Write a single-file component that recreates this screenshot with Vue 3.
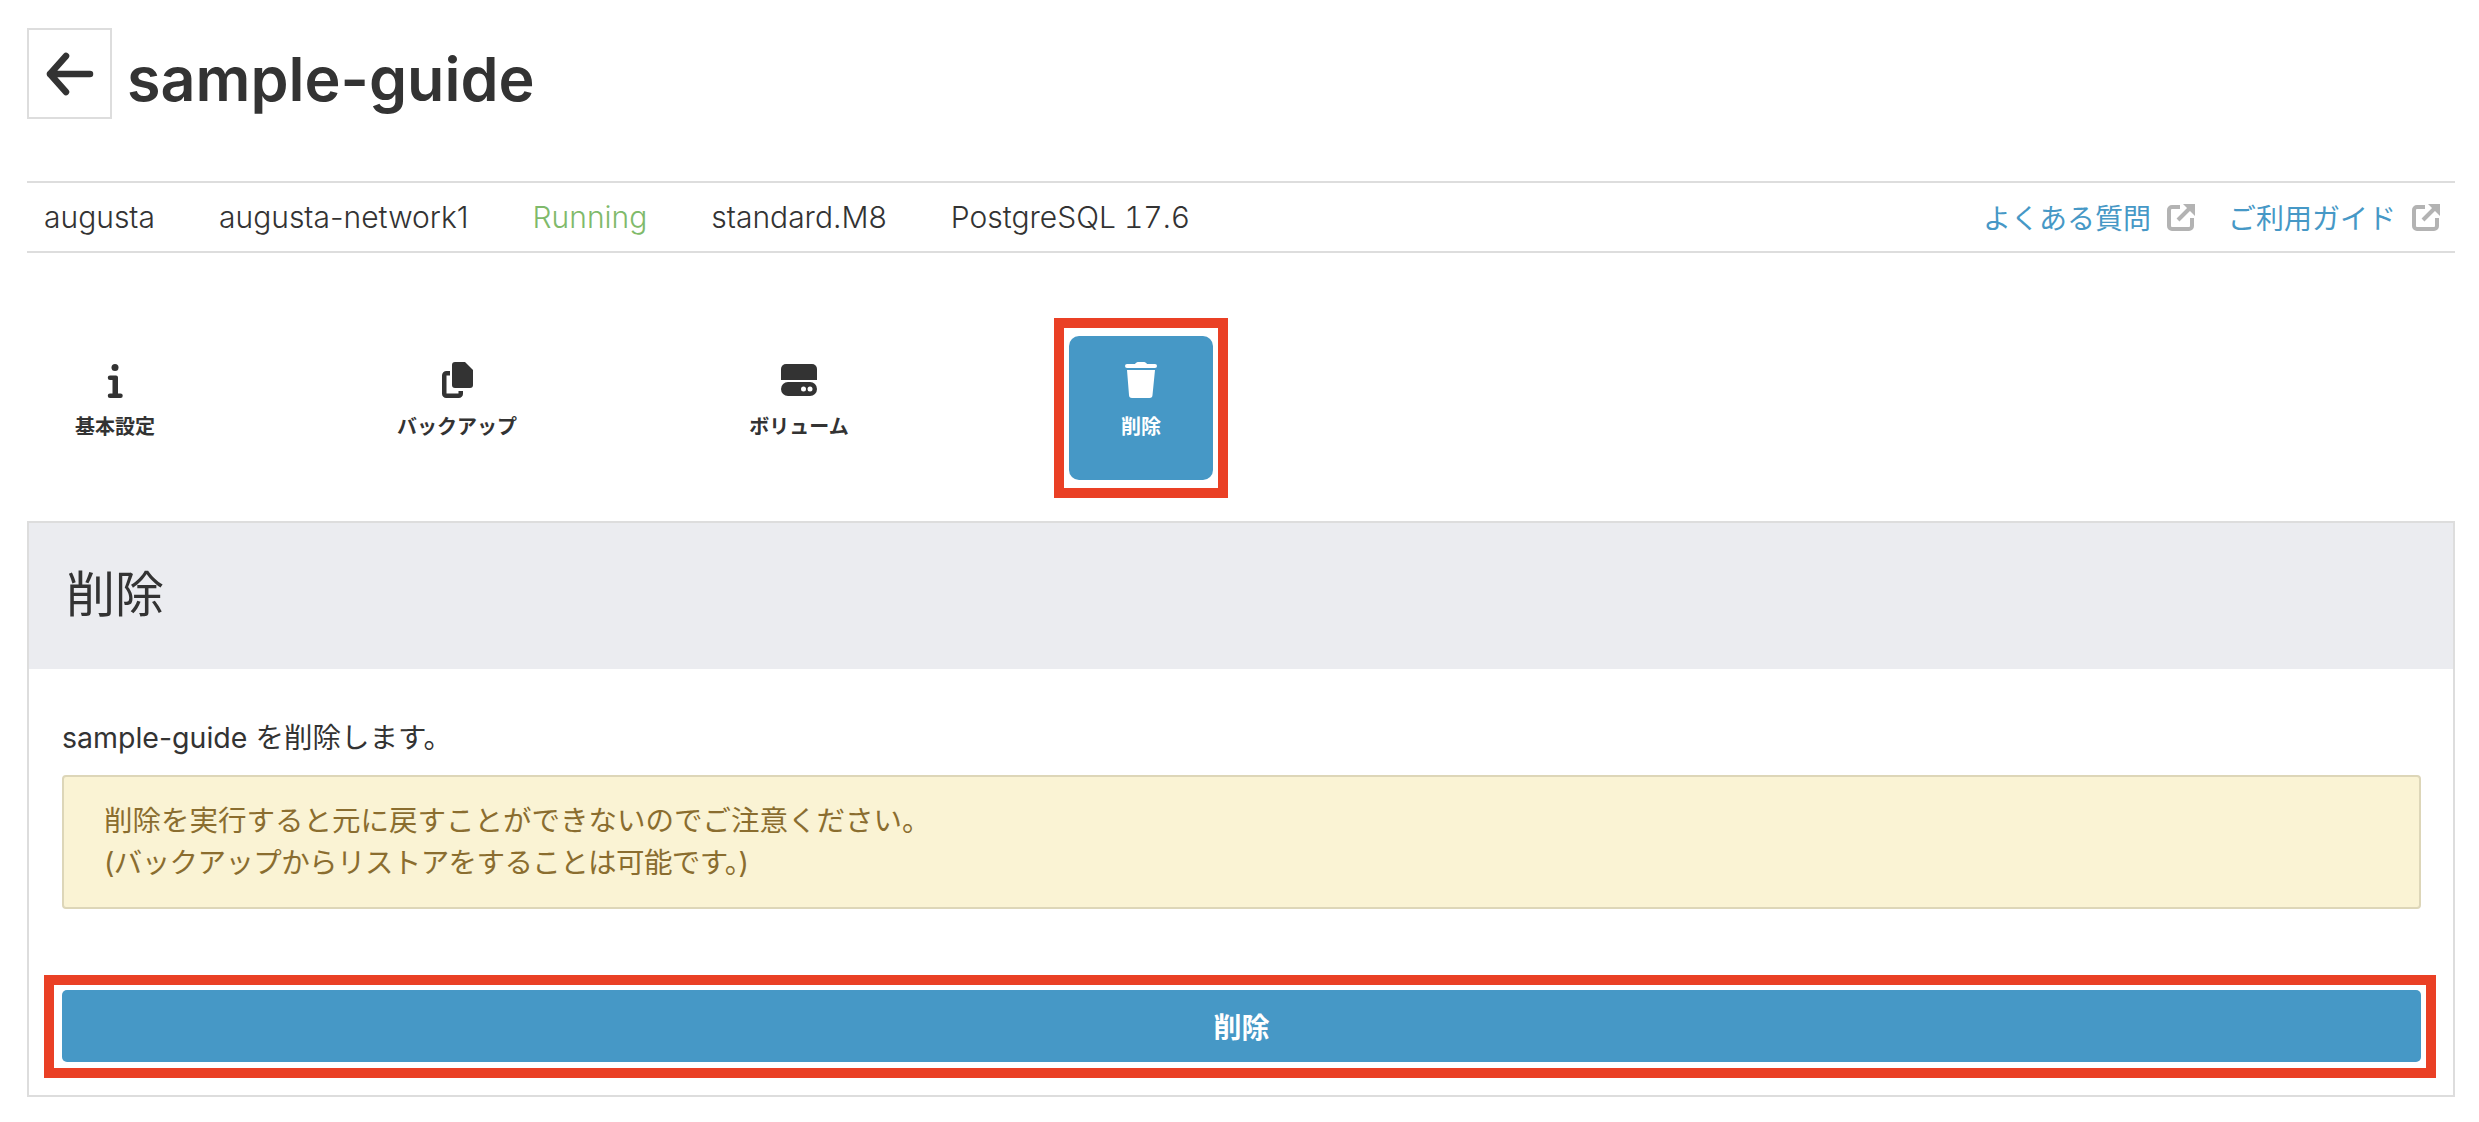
<template>
  <div class="page">
    <div class="title-row">
      <button class="back">
        <svg width="50" height="50" viewBox="0 0 50 50" fill="none" stroke="#333" stroke-width="6.500" stroke-linecap="round" stroke-linejoin="round">
          <path d="M5 25H45M21 7 5 25l16 18" />
        </svg>
      </button>
      <h1>sample-guide</h1>
    </div>

    <div class="meta">
      <span v-for="item in meta" :key="item.text" :class="{ running: item.running }">{{ item.text }}</span>
      <div class="links">
        <a v-for="link in links" :key="link">
          {{ link }}
          <svg width="28" height="28" viewBox="0 0 28 28" fill="none" stroke="#b3b3b3" stroke-width="4">
            <path d="M13 4H5a3 3 0 0 0-3 3v16a3 3 0 0 0 3 3h17a3 3 0 0 0 3-3v-8" />
            <path d="M11 17 23 5" />
            <path d="M16 1h12v12z" fill="#b3b3b3" stroke="none" />
          </svg>
        </a>
      </div>
    </div>

    <div class="tabs">
      <div v-for="tab in tabs" :key="tab.label" class="tab" :class="{ active: tab.active }">
        <svg width="40" height="42" viewBox="0 0 40 42" fill="currentColor" v-html="tab.icon"></svg>
        <span>{{ tab.label }}</span>
      </div>
    </div>

    <section class="panel">
      <h2>削除</h2>
      <div class="panel-body">
        <p class="lead">sample-guide を削除します。</p>
        <div class="alert">
          <p>削除を実行すると元に戻すことができないのでご注意ください。</p>
          <p class="alert-sub">(バックアップからリストアをすることは可能です。)</p>
        </div>
        <button class="delete">削除</button>
      </div>
    </section>
  </div>
</template>

<script setup>
const meta = [
  { text: 'augusta' },
  { text: 'augusta-network1' },
  { text: 'Running', running: true },
  { text: 'standard.M8' },
  { text: 'PostgreSQL 17.6' }
]

const links = ['よくある質問', 'ご利用ガイド']

const tabs = [
  {
    label: '基本設定',
    icon: '<circle cx="20" cy="8.500" r="3.500" /><path d="M15 16.500h6a2 2 0 0 1 2 2v16h2.500a2.250 2.250 0 0 1 0 4.500H15a2.250 2.250 0 0 1 0-4.500h2.500V21H15a2.250 2.250 0 0 1 0-4.500z" />'
  },
  {
    label: 'バックアップ',
    icon: '<path d="M18 3h10l8 8v15a3 3 0 0 1-3 3H18a3 3 0 0 1-3-3V6a3 3 0 0 1 3-3z" /><path d="M13 14.250H9.500a2.250 2.250 0 0 0-2.250 2.250v18.250a2 2 0 0 0 2 2h12.500a2 2 0 0 0 2-2V32" fill="none" stroke="currentColor" stroke-width="4.500" />'
  },
  {
    label: 'ボリューム',
    icon: '<path d="M7 5h26a5 5 0 0 1 5 5v11H2V10a5 5 0 0 1 5-5z" /><path fill-rule="evenodd" d="M9 23h22a7 7 0 0 1 0 14H9a7 7 0 0 1 0-14z" /><circle cx="24.500" cy="30" r="2.500" fill="#fff" /><circle cx="31" cy="30" r="2.500" fill="#fff" />'
  },
  {
    label: '削除',
    active: true,
    icon: '<path d="M6 5h8c1-1.500 2-2 4-2h4c2 0 3 .5 4 2h8a2 2 0 0 1 0 4H6a2 2 0 0 1 0-4z" /><path d="M6 11h28l-2.500 25a3 3 0 0 1-3 3H11a3 3 0 0 1-3-3z" />'
  }
]
</script>

<style>
body {
  background: #fff;
}
</style>

<style scoped>
.page {
  padding: 28px 24px 0 27px;
  font-family: Inter, "Noto Sans CJK JP", sans-serif;
  color: #333;
  font-size: 28.500px;
}

.title-row {
  display: flex;
  align-items: center;
  gap: 15px;
  height: 91px;
}

.back {
  width: 85px;
  height: 91px;
  padding: 0;
  display: flex;
  align-items: center;
  justify-content: center;
  background: #fff;
  border: 2px solid #ddd;
}

h1 {
  margin: 12px 0 0;
  font-size: 61px;
  font-weight: 600;
  line-height: 1;
  color: #333;
}

.meta {
  display: flex;
  align-items: center;
  gap: 64px;
  height: 72px;
  margin-top: 62px;
  padding: 0 15px 0 17px;
  border-top: 2px solid #ddd;
  border-bottom: 2px solid #ddd;
  box-sizing: border-box;
  font-size: 30px;
  font-weight: 350;
}

.meta span:last-of-type {
  font-variant-numeric: tabular-nums;
}

.running {
  color: #7fba6b;
}

.links {
  margin-left: auto;
  display: flex;
  gap: 33px;
  font-size: 28px;
  font-weight: 400;
}

.links a {
  display: flex;
  align-items: center;
  gap: 16px;
  color: #4698c6;
}

.tabs {
  display: flex;
  gap: 198px;
  margin-top: 83px;
  padding-left: 16px;
}

.tab {
  position: relative;
  width: 144px;
  height: 144px;
  padding-top: 23px;
  box-sizing: border-box;
  display: flex;
  flex-direction: column;
  align-items: center;
  gap: 14px;
  border-radius: 10px;
  font-size: 20px;
  font-weight: 700;
  line-height: 24px;
  white-space: nowrap;
}

.tab.active {
  background: #4698c6;
  color: #fff;
}

.tab.active::after {
  content: "";
  position: absolute;
  top: -18px;
  right: -15px;
  bottom: -18px;
  left: -15px;
  border: 10px solid #ea4025;
}

.panel {
  margin-top: 41px;
  border: 2px solid #ddd;
  height: 576px;
  box-sizing: border-box;
}

h2 {
  margin: 0;
  height: 146px;
  padding: 0 0 12px 37px;
  box-sizing: border-box;
  display: flex;
  align-items: center;
  background: #ebecf0;
  font-size: 49px;
  font-weight: 400;
}

.panel-body {
  padding: 0 32px 0 33px;
}

.lead {
  margin: 51px 0 0;
  line-height: 36px;
}

.alert {
  margin-top: 19px;
  height: 134px;
  padding: 0 40px;
  display: flex;
  flex-direction: column;
  justify-content: center;
  background: #faf3d4;
  border: 2px solid #ddd6b8;
  border-radius: 4px;
  color: #8a6d2f;
  box-sizing: border-box;
}

.alert p {
  margin: 0;
  line-height: 42px;
}

.alert .alert-sub {
  letter-spacing: -0.600px;
}

.delete {
  position: relative;
  display: block;
  width: 100%;
  height: 72px;
  margin-top: 81px;
  background: #4698c6;
  border: 0;
  border-radius: 5px;
  color: #fff;
  font: 700 28px Inter, "Noto Sans CJK JP", sans-serif;
}

.delete::after {
  content: "";
  position: absolute;
  top: -15px;
  right: -15px;
  bottom: -16px;
  left: -18px;
  border: 10px solid #ea4025;
}
</style>
